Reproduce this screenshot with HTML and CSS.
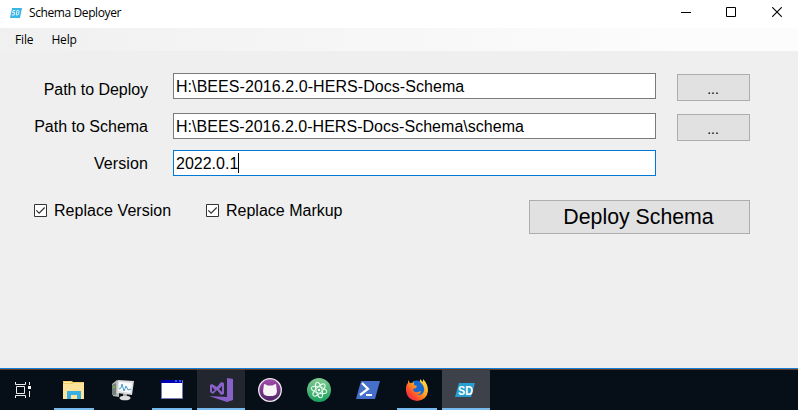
FILE: index.html
```html
<!DOCTYPE html>
<html lang="en">
<head>
<meta charset="utf-8">
<title>Schema Deployer</title>
<link rel="stylesheet" href="styles.css">
</head>
<body>
<main class="window">
  <header class="titlebar">
    <svg class="app-icon" width="12" height="10" viewBox="0 0 12 10"><path d="M2 0h10l-2 10H0z" fill="#39b5e8"/><path d="M5.2 2.5H3l-.4 2h2l-.4 2.5H1.8M7 2.5h1.5l.6 1-.5 2.5-1 1H6.2z" fill="none" stroke="#e5f6fd"/></svg>
    <h1 class="title">Schema Deployer</h1>
    <div class="controls">
      <svg class="minimize" width="10" height="11" viewBox="0 0 10 11"><path d="M0 5.5h10" stroke="#000"/></svg>
      <svg width="10" height="11" viewBox="0 0 10 11"><path d="M.5.5h9v9h-9z" fill="none" stroke="#000"/></svg>
      <svg width="10" height="11" viewBox="0 0 10 11"><path d="M.2.2l9.6 9.6M9.8.2L.2 9.8" stroke="#000" stroke-width="1.1"/></svg>
    </div>
  </header>
  <nav class="menubar"><span>File</span><span>Help</span></nav>
  <section class="form">
    <div class="row">
      <span class="label label-deploy">Path to Deploy</span>
      <div class="field"><span class="path-deploy">H:\BEES-2016.2.0-HERS-Docs-Schema</span></div>
      <div class="button browse">...</div>
    </div>
    <div class="row">
      <span class="label label-schema">Path to Schema</span>
      <div class="field"><span class="path-schema">H:\BEES-2016.2.0-HERS-Docs-Schema\schema</span></div>
      <div class="button browse">...</div>
    </div>
    <div class="row row-version">
      <span class="label label-version">Version</span>
      <div class="field focused"><span>2022.0.1</span><i class="caret"></i></div>
    </div>
    <div class="actions">
      <div class="check check-version"><svg width="13" height="13" viewBox="0 0 13 13"><path d="M.5.5h12v12H.5z" fill="#fff" stroke="#333"/><path d="M2.3 6.3l2.8 2.8 5.6-5.6" fill="none" stroke="#333" stroke-width="1.2"/></svg><span>Replace Version</span></div>
      <div class="check"><svg width="13" height="13" viewBox="0 0 13 13"><path d="M.5.5h12v12H.5z" fill="#fff" stroke="#333"/><path d="M2.3 6.3l2.8 2.8 5.6-5.6" fill="none" stroke="#333" stroke-width="1.2"/></svg><span>Replace Markup</span></div>
      <div class="button deploy"><span>Deploy Schema</span></div>
    </div>
  </section>
</main>
<footer class="taskbar">
  <div class="task task-view"><svg width="17" height="16" viewBox="0 0 17 16"><path d="M.5 0v2.5h10V0M.5 16v-2.5h10V16M1.500 4.500h8v7h-8zM14.5 0v3M14.5 9v6" fill="none" stroke="#eee"/><path d="M13 4h3v3h-3z" fill="#fff"/></svg></div>
  <div class="task open"><svg width="24" height="24" viewBox="0 0 24 24"><path d="M1 3h9l1 1h11v17H1z" fill="#f3cc63"/><path d="M1 6h9l2-1h10v16H1z" fill="#ffe39a"/><path d="M2 4h7v1H2z" fill="#fff1b0"/><path d="M5 21v-8h14v8h-4v-4H9v4z" fill="#39aee2"/></svg></div>
  <div class="task"><svg width="24" height="24" viewBox="0 0 24 24"><path d="M1 6l5-4 2 1v16l-6-1z" fill="#b5bab6"/><path d="M1 7l4-2v12H1z" fill="#777f7c"/><path d="M2 8h2v2H2z" fill="#69bd39"/><path d="M7 2l16 1-2 14-15-2z" fill="#ddd"/><path d="M8 4l13 1-1.5 10L7.500 13z" fill="#f7fbfd"/><path d="M8 11l2-1 1-4 2 7 2-5 2 4 3-1" fill="none" stroke="#4b9bc5"/><path d="M12 16h4v3h-4z" fill="#aaa"/><ellipse cx="14" cy="20" rx="5.500" ry="2.300" fill="#ddd"/></svg></div>
  <div class="task open"><svg width="24" height="24" viewBox="0 0 24 24"><path d="M1.500 2.500h21v18h-21z" fill="#fff" stroke="#777abb"/><path d="M1 2h21v3H1z" fill="#0000b7"/><path d="M15 3h2M19 3h2" stroke="#53b4ff"/></svg></div>
  <div class="task open selected"><svg width="24" height="24" viewBox="0 0 24 24"><path fill-rule="evenodd" d="M1 7l2-1 5 3 4-5 3 1v11l-3 1-4-5-4 4-3-2zm2 2v5l3-2zm7 2l3 3V8z" fill="#8a61c9"/><path d="M18 0l6 1v21l-6 2-18-6 18 1z" fill="#8a61c9"/></svg></div>
  <div class="task"><svg width="24" height="24" viewBox="0 0 24 24"><defs><linearGradient id="cat" x2="0" y2="1"><stop stop-color="#a44ead"/><stop offset="1" stop-color="#4f2467"/></linearGradient></defs><circle cx="12" cy="12" r="11.300" fill="url(#cat)" stroke="#eee9ee" stroke-width="1.300"/><path d="M6 6q2 0 3.500 1.500h5Q16 6 18 6l.5 4q2 7-4 8h-5q-6-1-4-8z" fill="#f8f3f5"/></svg></div>
  <div class="task"><svg width="24" height="24" viewBox="0 0 24 24"><defs><linearGradient id="atom" x2="0" y2="1"><stop stop-color="#83ca91"/><stop offset="1" stop-color="#18a05e"/></linearGradient></defs><circle cx="12" cy="12" r="12" fill="url(#atom)"/><g fill="none" stroke="#e6f7eb" stroke-width="1"><ellipse cx="12" cy="12" rx="8" ry="3" transform="rotate(15 12 12)"/><ellipse cx="12" cy="12" rx="8" ry="3" transform="rotate(75 12 12)"/><ellipse cx="12" cy="12" rx="8" ry="3" transform="rotate(135 12 12)"/></g><circle cx="12" cy="12" r="1.300" fill="#fff"/></svg></div>
  <div class="task"><svg width="24" height="24" viewBox="0 0 24 24"><path d="M5 3h19l-5 18H0z" fill="#456fca"/><path d="M6 5l6 6-8 6M10 17h6" fill="none" stroke="#fff" stroke-width="2.200"/></svg></div>
  <div class="task open"><svg width="24" height="24" viewBox="0 0 24 24"><defs><linearGradient id="fox" x1="1" x2="0" y2="1"><stop stop-color="#fff34a"/><stop offset=".45" stop-color="#ff9a20"/><stop offset=".75" stop-color="#fa3e30"/><stop offset="1" stop-color="#df217d"/></linearGradient></defs><circle cx="12" cy="11" r="8.500" fill="#1768d1"/><path d="M3 2l2 3h3l1-2v4l3 1-1 2-3 1q1 4 5 3l3-1q-1 5-6 3 7 3 9-3 1-5-4-9l0-3 3 3V1q5 5 5 12-1 9-11 10Q2 22 1 13 .5 7 3 5z" fill="url(#fox)"/></svg></div>
  <div class="task open active"><svg width="24" height="24" viewBox="0 0 24 24"><path d="M5 5h16l-4 14H1z" fill="#299fd1"/><text class="logo-text" x="4" y="16.500" textLength="15" lengthAdjust="spacingAndGlyphs">SD</text></svg></div>
</footer>
</body>
</html>
```
FILE: styles.css
```css
* { box-sizing: border-box; }
body { margin: 0; width: 798px; height: 410px; overflow: hidden; font-family: "Liberation Sans", Arial, sans-serif; font-size: 16px; color: #000; }
svg { display: block; flex: none; }
.window { height: 369px; background: #efefef; border-bottom: 1px solid #1580d5; }
.titlebar { display: flex; height: 28px; align-items: center; padding: 0 16px 3px 10px; background: #fff; }
.app-icon { margin-right: 7px; }
.title { margin: 0; padding-top: 1px; font: 12px/16px "Open Sans", "Noto Sans", sans-serif; letter-spacing: -.4px; }
.controls { display: flex; gap: 36px; margin-left: auto; }
.minimize { margin-right: -1px; }
.menubar { display: flex; gap: 18px; height: 23px; padding: 4px 15px; font: 12px/16px "Open Sans", "Noto Sans", sans-serif; letter-spacing: -.15px; background: linear-gradient(90deg, #f0f0f0, #fcfcfc 85%); }
.form { padding-top: 22px; }
.row { display: grid; grid-template-columns: 148px 483px 73px; column-gap: 25px; height: 40px; align-items: start; }
.row-version { height: 26px; margin-top: -3px; }
.label { text-align: right; line-height: 26px; padding-top: 1px; }
.label-deploy { padding-top: 4px; letter-spacing: -.05px; }
.label-version { letter-spacing: .1px; }
.field { display: flex; align-items: center; height: 26px; border: 1px solid #7a7a7a; background: #fff; padding: 2px 2px 0; white-space: pre; }
.path-deploy { letter-spacing: .06px; }
.path-schema { letter-spacing: .03px; }
.focused { border-color: #0078d7; }
.caret { width: 1px; height: 20px; margin-top: -2px; background: #000; }
.button { display: flex; justify-content: center; align-items: center; background: #e1e1e1; border: 1px solid #adadad; }
.browse { width: 73px; height: 27px; margin: 1px 0 0 -4px; font-size: 14px; padding: 2px 1px 0 0; }
.actions { display: flex; height: 34px; margin: 24px 48px 0 34px; align-items: flex-start; }
.check { display: flex; align-items: center; gap: 7px; height: 21px; }
.check-version { width: 172px; letter-spacing: .05px; }
.deploy { width: 221px; height: 34px; margin-left: auto; padding-right: 2px; font-size: 21.300px; }
.taskbar { display: flex; gap: 1px; height: 41px; padding-left: 1px; background: #060e17; border-top: 1px solid #653b24; }
.task { display: flex; width: 48px; height: 40px; align-items: center; justify-content: center; }
.task-view { padding-right: 4px; }
.open { background: linear-gradient(#76b9ed, #76b9ed) 50% 100% / 40px 2px no-repeat; }
.selected { background-color: #22272f; background-size: 48px 2px; }
.active { background-color: #3d424a; background-size: 48px 2px; }
.logo-text { font: bold 12.500px "Liberation Sans", sans-serif; fill: #fff; }
```
